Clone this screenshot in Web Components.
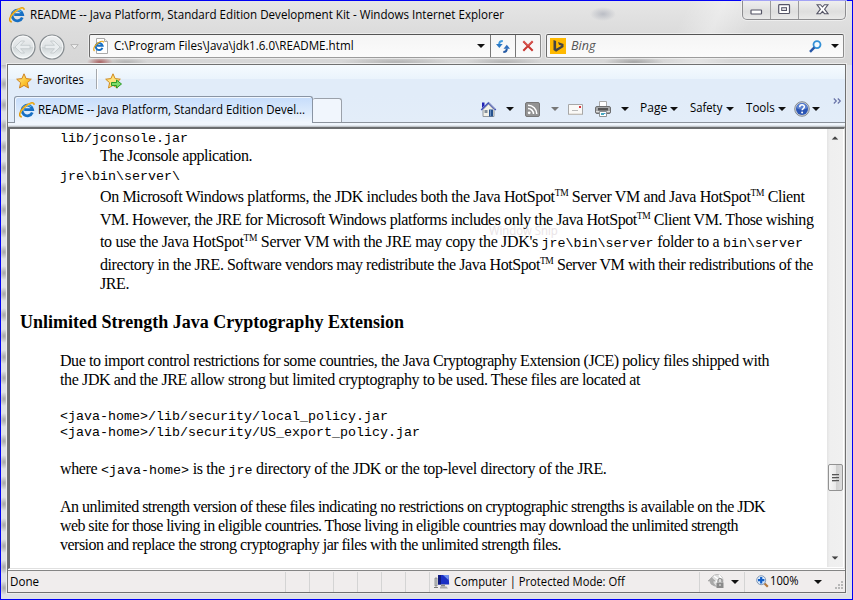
<!DOCTYPE html>
<html lang="en"><head><meta charset="utf-8"><title>README -- Java Platform, Standard Edition Development Kit</title>
<style>html,body{margin:0;width:853px;height:600px;overflow:hidden}</style></head>
<body><browser-window></browser-window>
<script>
const define=(name,html,after)=>customElements.define(name,class extends HTMLElement{
  constructor(){super();this.attachShadow({mode:'open'})}
  connectedCallback(){this.shadowRoot.innerHTML=html;if(after)after.call(this)}
});

/* Label squeezed horizontally to the width in its w attribute. */
define('ui-label',`<style>:host{display:block;flex:none;height:18px;font:12px/18px "Open Sans","Noto Sans",sans-serif;white-space:nowrap}
span{display:inline-block;transform-origin:0 50%}</style><span><slot></slot></span>`,function(){
  const w=+this.getAttribute('w'),s=this.shadowRoot.querySelector('span');
  this.style.width=w+'px';
  s.style.transform=`scaleX(${w/s.offsetWidth})`;
});

/* Line of document text: w = measure, h = distance to the next line. */
define('doc-line',`<style>:host{display:block;height:19px;white-space:nowrap;font:16px/19px "Liberation Serif",serif}
:host([bold]){font-weight:bold;font-size:18px}
::slotted(code){font:13.33px/1 "Liberation Mono",monospace;letter-spacing:0}
::slotted(sup){font-size:9.5px;line-height:0;vertical-align:6px}</style><span><slot></slot></span>`,function(){
  const w=+this.getAttribute('w'),s=this.shadowRoot.querySelector('span');
  this.style.height=this.getAttribute('h')+'px';
  this.style.paddingLeft=this.getAttribute('x')+'px';
  const mono=[...this.querySelectorAll('code')].reduce((n,c)=>n+c.textContent.length,0);
  const n=this.textContent.length-mono;
  if(n)s.style.letterSpacing=((w-s.getBoundingClientRect().width)/n)+'px';
});

define('drop-arrow',`<style>:host{display:block;flex:none;width:8px;height:4px;color:#111}svg{display:block}</style>
<svg width="8" height="4"><path d="M0 0h8L4 4z" fill="currentColor"/></svg>`);

const icons={
ie:`<svg width="16" height="16" viewBox="0 0 16 16"><path d="M13.3 10.5A5.3 5.3 0 1 1 13.6 7.6H5.2" fill="none" stroke="#176fc3" stroke-width="2.8"/><path d="M12.2 4.9A5 5 0 0 0 3.6 7" fill="none" stroke="#55b8f2" stroke-width="1.1"/><path d="M2.8 14.8C-.8 14.5.6 9.3 5.4 5 10.3.6 15.2-.3 15.1 2.8" fill="none" stroke="#e49a08" stroke-width="1.7"/><path d="M2.2 13.9C.5 12.8 2 9 5.8 5.3 9.8 1.6 13.7.5 14.5 2" fill="none" stroke="#ffda50" stroke-width=".7"/></svg>`,
page:`<svg width="16" height="17" viewBox="0 0 16 17"><path d="M3.5.5h8l3 3v12h-11z" fill="#fff" stroke="#aaa"/><path d="M11.500.5v3h3" fill="#eee" stroke="#aaa"/><path d="M9.400 9.900A3.500 3.500 0 1 1 9.600 7.800H4" fill="none" stroke="#176fc3" stroke-width="2"/><path d="M1.500 13C-.5 11 2 7 5 5s5.500-2.500 5.500-.5" fill="none" stroke="#e9a71c" stroke-width="1.200"/></svg>`,
star:`<svg width="16" height="16" viewBox="0 0 16 16"><defs><linearGradient id="g" x2="1" y2="1"><stop stop-color="#fff2a0"/><stop offset=".6" stop-color="#fcc22c"/><stop offset="1" stop-color="#ef9a12"/></linearGradient></defs><path d="M8 .8l2.100 4.800 5.200.6-3.900 3.500 1.100 5.300L8 12.400l-4.500 2.600 1.100-5.300L.7 6.200l5.200-.6z" fill="url(#g)" stroke="#cf8220"/></svg>`,
staradd:`<svg width="17" height="16" viewBox="0 0 17 16"><path d="M8 .8l2.100 4.800 5.200.6-3.900 3.500 1.100 5.300L8 12.400l-4.500 2.600 1.100-5.300L.7 6.200l5.200-.6z" fill="#ffe27a" stroke="#cf8a20"/><path d="M6.500 9.500h5V7l5 4-5 4v-2.500h-5z" fill="#7fdc6a" stroke="#2c9a26"/></svg>`,
back:`<svg width="26" height="26" viewBox="0 0 26 26"><defs><linearGradient id="b" y2="1" x2="0"><stop stop-color="#eef0f1"/><stop offset=".48" stop-color="#dfe3e5"/><stop offset=".52" stop-color="#ced4d6"/><stop offset="1" stop-color="#f4f8f9"/></linearGradient></defs><circle cx="13" cy="13" r="12" fill="url(#b)" stroke="#858b8f" stroke-width="1.200"/><circle cx="13" cy="13" r="10.800" fill="none" stroke="#fff" opacity=".7"/><path d="M5 13l6-6h3.500l-4 4.300H20v3.400h-9.500l4 4.300H11z" fill="#e9edef" stroke="#c0c6c9" stroke-width=".8"/></svg>`,
hollow:`<svg width="9" height="6"><path d="M.8.600h7.400L4.500 5z" fill="#f2f2f2" stroke="#b5b5b5"/></svg>`,
refresh:`<svg width="14" height="13" viewBox="0 0 14 13"><path d="M6.800 1C3.900 1 3.200 2.400 3.200 4.300" fill="none" stroke="#3f9ade" stroke-width="2"/><path d="M0 4h6.600L3.300 8z" fill="#2b78c4"/><path d="M7.300 12c2.800 0 3.500-1.500 3.500-3.500" fill="none" stroke="#255aa4" stroke-width="2"/><path d="M7.500 8.800h6.500L10.800 4.800z" fill="#2f6fbd"/></svg>`,
stop:`<svg width="12" height="12" viewBox="0 0 12 12"><path d="M1.300 1.200l9.400 9.600M10.700 1.200L1.300 10.800" stroke="#c8352f" stroke-width="2"/><path d="M1.500 1L6 5.500 10.500 1" fill="none" stroke="#ef8580" stroke-width=".7"/></svg>`,
bing:`<svg width="16" height="16"><path d="M0 0h16v16H0z" fill="#ffb900"/><path d="M3.500 2l2.600 1v7.800l5.400-3-2.500-1-1-2.700 5.500 2v3L6.100 13.800 3.500 12z" fill="#444"/></svg>`,
search:`<svg width="13" height="13" viewBox="0 0 13 13"><circle cx="8" cy="4.600" r="3.500" fill="#f4faff" stroke="#3290d6" stroke-width="1.800"/><path d="M5.400 7.300L1 11.900" stroke="#2858a8" stroke-width="2.400"/></svg>`,
home:`<svg width="17" height="17" viewBox="0 0 17 17"><path d="M2 1.500h2.500v3L2 7z" fill="#2222b5"/><path d="M3 8.500L8.500 3 14 8.500V15.500H3z" fill="#f3f1e8" stroke="#91979c"/><path d="M1.200 9L8.500 1.700 15.800 9" fill="none" stroke="#4250b9" stroke-width="1.500"/><path d="M8.500 1.500L15 8" stroke="#8791ba"/><path d="M4.500 9h3v3h-3z" fill="#85909a"/><path d="M9 8.500h4v7H9z" fill="#26528e"/><path d="M10 9h1v6h-1z" fill="#688fc2"/></svg>`,
rss:`<svg width="15" height="15"><rect x=".5" y=".5" width="14" height="14" rx="1.500" fill="#929292" stroke="#777"/><circle cx="4.200" cy="10.800" r="1.400" fill="#fff"/><path d="M3 6.500a5.500 5.500 0 0 1 5.500 5.500M3 3.200a8.800 8.800 0 0 1 8.800 8.800" stroke="#fff" stroke-width="1.500" fill="none"/></svg>`,
mail:`<svg width="15" height="11"><path d="M.5.500h14v10H.5z" fill="#faf9f7" stroke="#a7a7a7"/><path d="M11 2h2v2h-2z" fill="#d9333a"/><path d="M4 6.500h6" stroke="#bbb"/><path d="M1 10h13" stroke="#d7d1c9"/></svg>`,
print:`<svg width="16" height="16"><path d="M4.500.500h7V7h-7z" fill="#fff" stroke="#aaa"/><rect x=".5" y="5.500" width="15" height="7" rx="1.500" fill="#a7a8a9" stroke="#6e6f70"/><path d="M3 7h10v2.500H3z" fill="#555"/><path d="M1 10.500h14" stroke="#ddd"/><path d="M4.500 10.500h7v5h-7z" fill="#fff" stroke="#8c9093"/><path d="M6 12h3v2H6z" fill="#46aac0"/><path d="M9 12h1.500v1H9z" fill="#4b90d0"/></svg>`,
help:`<svg width="16" height="16"><circle cx="8" cy="8" r="7.300" fill="#c9ced5" stroke="#858b93"/><circle cx="8" cy="8" r="6" fill="#2a55b5"/><path d="M2.300 7a5.800 5.800 0 0 1 11.400 0q-6 3-11.400 0" fill="#5b82d1"/><path d="M5.700 6.200c0-3.300 4.700-3 4.700-.4 0 1.800-2.300 1.700-2.300 3.500" fill="none" stroke="#fff" stroke-width="1.500"/><circle cx="8.100" cy="11.500" r="1" fill="#fff"/></svg>`,
chev:`<svg width="9" height="6"><path d="M.8.500L3.300 3 .8 5.500M4.800.500L7.300 3 4.800 5.500" fill="none" stroke="#6873a8" stroke-width="1.200"/></svg>`,
pc:`<svg width="16" height="16"><path d="M1 4h2v8H1z" fill="#c5c9cd" stroke="#777" stroke-width=".7"/><path d="M4 1h10.500l.7 9.500H4z" fill="#1a2fc4"/><path d="M9 1h5.500v5z" fill="#6f91ef"/><path d="M4 1h3v9.500H4z" fill="#111a80"/><path d="M7 10.500h4v2H7z" fill="#888"/><path d="M6 12.500h6.500l1.500 2H6z" fill="#aaa"/><path d="M0 13.500h4" stroke="#777"/></svg>`,
lock:`<svg width="17" height="15"><circle cx="9" cy="6.500" r="6" fill="#ddd" stroke="#bbb"/><path d="M6 2l4 3-2 4M11 1l3 4" stroke="#fff" stroke-width="1.500" fill="none"/><path d="M0 7l3.500-3.500L7 7H5c0 2 1 3 2.500 4.500C4 11.500 2 10 2 7z" fill="#aaa" stroke="#999" stroke-width=".5"/><path d="M8.500 8.500h7v5.500h-7z" fill="#8a8a8a"/><path d="M10 8V6.500a2 2 0 0 1 4 0V8" fill="none" stroke="#888" stroke-width="1.200"/><path d="M11.500 10h1v2h-1z" fill="#eee"/></svg>`,
zoom:`<svg width="13" height="13"><path d="M8 8l3.800 3.800" stroke="#b4793e" stroke-width="2.200"/><circle cx="5.200" cy="5.200" r="4.500" fill="#dceafb" stroke="#8298b4"/><path d="M5.200 2v6.400M2 5.200h6.400" stroke="#125fc8" stroke-width="2.200"/></svg>`,
min:`<svg width="13" height="7"><rect x="1" y="1" width="10.500" height="4" rx=".5" fill="#fff" stroke="#555566" stroke-width="1.200"/></svg>`,
max:`<svg width="13" height="11"><rect x=".7" y=".7" width="10.800" height="8.800" rx=".8" fill="#fff" stroke="#555566" stroke-width="1.200"/><rect x="3.700" y="3.700" width="4.800" height="2.800" fill="#e0e0e4" stroke="#555566"/></svg>`,
close:`<svg width="13" height="11"><path d="M1 .7h3.500l2 2.300 2-2.300H12L8.600 5.200 12 9.700H8.500l-2-2.400-2 2.400H1l3.400-4.500z" fill="#fff" stroke="#555566" stroke-width="1.100"/></svg>`
};
define('ui-icon',`<style>:host{display:block;flex:none}:host([flip]){transform:scaleX(-1)}svg{display:block}</style>`,function(){
  this.shadowRoot.innerHTML+=icons[this.getAttribute('name')];
});

define('title-bar',`<style>:host{display:flex;height:33px;flex:none;padding-left:8px;align-items:flex-start}
ui-icon{margin-top:6px}ui-label{margin:5px 0 0 5px}
.b{display:flex;width:102px;height:18px;margin:0 6px 0 auto;border:1px solid #8d8d90;border-top:0;border-radius:0 0 5px 5px;box-shadow:0 0 0 1px #f4f4f4aa;background:linear-gradient(#efefef,#dedede 60%,#e9e9e9)}
.b span{display:flex;align-items:flex-start;justify-content:center;width:27px;border-right:1px solid #9b9b9d}
.b span:last-child{width:46px;border:0}.b ui-icon{margin-top:3px}.b span:first-child ui-icon{margin-top:8px}
</style><ui-icon name="ie"></ui-icon><ui-label w="474">README -- Java Platform, Standard Edition Development Kit - Windows Internet Explorer</ui-label>
<div class="b"><span><ui-icon name="min"></ui-icon></span><span><ui-icon name="max"></ui-icon></span><span><ui-icon name="close"></ui-icon></span></div>`);

define('nav-bar',`<style>:host{display:flex;height:30px;flex:none;padding-left:9px}
.n{display:flex;gap:3px;width:79px;align-items:center;height:25px}.n ui-icon:nth-child(3){margin-left:2px}
.f{display:flex;align-items:center;box-sizing:border-box;height:24px;border:1px solid #5f5f5f;border-color:#555 #8b8b8b #9c9c9c #6b6b6b;border-radius:2px;background:linear-gradient(#f5f5f5,#fbfbfb);box-shadow:0 0 0 1px #f5f5f5aa}
.a{width:452px}.s{width:298px;margin-left:5px}
.c{box-sizing:border-box;height:22px;border-left:1px solid #777;display:flex;align-items:center;justify-content:center;width:25px}
</style><div class="n"><ui-icon name="back"></ui-icon><ui-icon name="back" flip></ui-icon><ui-icon name="hollow"></ui-icon></div>
<div class="f a"><ui-icon name="page" style="margin-left:3px"></ui-icon><ui-label w="240" style="margin-left:5px">C:\\Program Files\\Java\\jdk1.6.0\\README.html</ui-label><drop-arrow style="margin-left:auto;margin-right:5px"></drop-arrow>
<div class="c"><ui-icon name="refresh"></ui-icon></div><div class="c"><ui-icon name="stop"></ui-icon></div></div>
<div class="f s"><ui-icon name="bing" style="margin-left:3px"></ui-icon><ui-label w="24" style="margin-left:5px;font-style:italic;color:#555">Bing</ui-label><ui-icon name="search" style="margin-left:auto;margin-right:9px"></ui-icon><drop-arrow style="margin-right:4px"></drop-arrow></div>`);

define('favorites-bar',`<style>:host{display:flex;height:31px;flex:none;align-items:center;padding-left:8px;background:linear-gradient(#f5fafe,#eaf3fc 14px,#e1ecf9 14px)}
b{width:1px;height:20px;background:#a4a8ad;margin:-3px 7px 0 12px;border-right:1px solid #fff}</style>
<ui-icon name="star"></ui-icon><ui-label w="47" style="margin-left:5px;margin-top:-1px">Favorites</ui-label><b></b><ui-icon name="staradd"></ui-icon>`);

define('command-bar',`<style>:host{display:flex;height:27px;flex:none;background:linear-gradient(#e1ecf9,#e3edf9);box-sizing:border-box;border-bottom:1px solid #8b929c}
.t{display:flex;align-items:center;box-sizing:border-box;width:299px;height:27px;margin-left:6px;border:1px solid #8a95a4;border-bottom:0;border-radius:3px 3px 0 0;background:linear-gradient(#c5dcfb,#ddebfc 60%,#f2f7fd);padding-left:4px;box-shadow:inset 1px 1px #eff6ff}
.n{box-sizing:border-box;width:29px;height:24px;margin-top:2px;border:1px solid #9ba1aa;border-left:0;border-bottom:0;border-radius:2px 3px 0 0;background:#f1f6fd}
.c{display:flex;flex:1;align-items:center;height:26px}</style>
<div class="t"><ui-icon name="ie"></ui-icon><ui-label w="267" style="margin-left:3px">README -- Java Platform, Standard Edition Devel...</ui-label></div><div class="n"></div>
<div class="c"><ui-icon name="home" style="margin-left:138px"></ui-icon><drop-arrow style="margin-left:9px"></drop-arrow>
<ui-icon name="rss" style="margin-left:11px"></ui-icon><drop-arrow style="margin-left:11px;color:#777"></drop-arrow>
<ui-icon name="mail" style="margin-left:9px"></ui-icon><ui-icon name="print" style="margin-left:12px"></ui-icon><drop-arrow style="margin-left:10px"></drop-arrow>
<ui-label w="27" style="margin-left:11px;margin-top:-2px">Page</ui-label><drop-arrow style="margin-left:3px"></drop-arrow>
<ui-label w="32" style="margin-left:12px;margin-top:-2px">Safety</ui-label><drop-arrow style="margin-left:4px"></drop-arrow>
<ui-label w="29" style="margin-left:12px;margin-top:-2px">Tools</ui-label><drop-arrow style="margin-left:3px"></drop-arrow>
<ui-icon name="help" style="margin-left:8px"></ui-icon><drop-arrow style="margin-left:2px"></drop-arrow><ui-icon name="chev" style="margin:-16px 3px 0 auto"></ui-icon></div>`);

define('scroll-bar',`<style>:host{display:flex;flex-direction:column;align-items:center;width:16px;height:438px;background:linear-gradient(90deg,#e4e4e4,#efefef 3px,#f0f0f0);margin-right:1px}
.h{box-sizing:border-box;width:15px;height:27px;border:1px solid #929292;border-radius:2px;background:linear-gradient(90deg,#f7f7f7,#e9e9e9 50%,#cfcfcf 55%,#dcdcdc);margin-top:324px;display:flex;flex-direction:column;gap:1px;align-items:center;justify-content:center}
.h i{width:7px;height:2px;background:linear-gradient(#555 50%,#bbb 50%)}
drop-arrow{color:#444;transform:scale(.85)}.u{transform:scale(.85,-.85);margin-top:7px}.d{margin-top:auto;margin-bottom:7px}</style>
<drop-arrow class="u"></drop-arrow><div class="h"><i></i><i></i><i></i></div><drop-arrow class="d"></drop-arrow>`);

const tm='<sup>TM</sup>';
define('readme-page',`<style>:host{display:flex;flex:none;height:439px;box-sizing:content-box;border-left:2px solid #6b6d6f;border-top:2px solid #6b6d6f;border-right:1px solid #e3e3e3;border-bottom:1px solid #e0e0e0;background:#fff;color:#000;position:relative}
article{position:relative;flex:1;min-width:0;margin-top:-2px}
.ghost{position:absolute;left:479px;top:93px;color:#e9e3e6}</style><div class="ghost"><ui-label w="69">Window Snip</ui-label></div><article>
<doc-line x="50" w="128" h="19"><code>lib/jconsole.jar</code></doc-line>
<doc-line x="90" w="152" h="19">The Jconsole application.</doc-line>
<doc-line x="50" w="120" h="22"><code>jre\\bin\\server\\</code></doc-line>
<doc-line x="90" w="704.500" h="23">On Microsoft Windows platforms, the JDK includes both the Java HotSpot${tm} Server VM and Java HotSpot${tm} Client</doc-line>
<doc-line x="90" w="713.500" h="22">VM. However, the JRE for Microsoft Windows platforms includes only the Java HotSpot${tm} Client VM. Those wishing</doc-line>
<doc-line x="90" w="703" h="23">to use the Java HotSpot${tm} Server VM with the JRE may copy the JDK's <code>jre\\bin\\server</code> folder to a <code>bin\\server</code></doc-line>
<doc-line x="90" w="713" h="19">directory in the JRE. Software vendors may redistribute the Java HotSpot${tm} Server VM with their redistributions of the</doc-line>
<doc-line x="90" w="29" h="39">JRE.</doc-line>
<doc-line x="10" w="384" h="38" bold>Unlimited Strength Java Cryptography Extension</doc-line>
<doc-line x="50" w="709" h="19">Due to import control restrictions for some countries, the Java Cryptography Extension (JCE) policy files shipped with</doc-line>
<doc-line x="50" w="580" h="35">the JDK and the JRE allow strong but limited cryptography to be used. These files are located at</doc-line>
<doc-line x="50" w="328" h="16"><code>&lt;java-home&gt;/lib/security/local_policy.jar</code></doc-line>
<doc-line x="50" w="360" h="38"><code>&lt;java-home&gt;/lib/security/US_export_policy.jar</code></doc-line>
<doc-line x="50" w="546.500" h="38">where <code>&lt;java-home&gt;</code> is the <code>jre</code> directory of the JDK or the top-level directory of the JRE.</doc-line>
<doc-line x="50" w="705" h="19">An unlimited strength version of these files indicating no restrictions on cryptographic strengths is available on the JDK</doc-line>
<doc-line x="50" w="678" h="19">web site for those living in eligible countries. Those living in eligible countries may download the unlimited strength</doc-line>
<doc-line x="50" w="501" h="19">version and replace the strong cryptography jar files with the unlimited strength files.</doc-line>
</article><scroll-bar></scroll-bar>`);

define('status-bar',`<style>:host{display:flex;align-items:center;flex:1;border-top:1px solid #858585;background:#f0eded;margin-top:1px;padding-left:2px}
b{width:1px;height:20px;background:#d4d4d4;margin-right:23px;flex:none}b.l{margin-right:4px}
svg{margin:8px 1px 0 auto}</style>
<ui-label w="29">Done</ui-label><b style="margin-left:246px"></b><b></b><b></b><b></b><b></b><b></b><b class="l"></b>
<ui-icon name="pc"></ui-icon><ui-label w="171" style="margin-left:4px">Computer | Protected Mode: Off</ui-label>
<b style="margin-left:74px;margin-right:8px"></b><ui-icon name="lock"></ui-icon><drop-arrow style="margin-left:6px"></drop-arrow><b style="margin-left:5px;margin-right:11px"></b>
<ui-icon name="zoom"></ui-icon><ui-label w="29" style="margin-left:1px;margin-top:-2px">100%</ui-label><drop-arrow style="margin-left:15px"></drop-arrow>
<svg width="9" height="9"><path d="M6 0h2v2H6zM3 3h2v2H3zM6 3h2v2H6zM0 6h2v2H0zM3 6h2v2H3zM6 6h2v2H6z" fill="#b8b8b8"/></svg>`);

define('browser-window',`<style>:host{display:flex;flex-direction:column;box-sizing:border-box;width:853px;height:600px;border:1px solid #0000f5;color:#000;
background:
radial-gradient(ellipse 13px 7px at 602px 13px,#a9adb8b0,transparent),
radial-gradient(ellipse 13px 5px at 99px 61px,#a04848d0,transparent),
radial-gradient(ellipse 22px 4px at 125px 61px,#99999990,transparent),
radial-gradient(ellipse 55px 5px at 395px 61px,#99999990,transparent),
radial-gradient(ellipse 38px 5px at 503px 61px,#99999990,transparent),
radial-gradient(ellipse 30px 5px at 633px 61px,#80808090,transparent),
linear-gradient(115deg,transparent 78%,#ffffff50 82%,transparent 86%) 0 0/853px 64px no-repeat,
linear-gradient(#e6e6e6,#dcdcdc 30px,#d6d6d6 64px,transparent 64px),
radial-gradient(ellipse 5px 7px at 3px 10px,#a6a6a6,#a6a6a600) 0 94px/7px 21px repeat-y,#dfe1e5}
.frame{display:flex;flex-direction:column;flex:1;margin:0 6px 6px;border:1px solid #707070;outline:1px solid #ececec;background:#fff}
.gap{height:4px;flex:none;background:linear-gradient(#f0f6fd 2px,#b0b4b8)}</style>
<title-bar></title-bar><nav-bar></nav-bar><div class="frame"><favorites-bar></favorites-bar><command-bar></command-bar><div class="gap"></div><readme-page></readme-page><status-bar></status-bar></div>`);
</script></body></html>
